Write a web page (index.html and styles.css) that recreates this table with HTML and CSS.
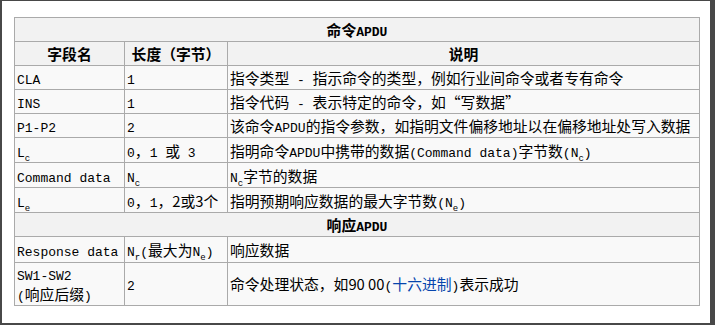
FILE: index.html
```html
<!DOCTYPE html>
<html lang="zh-CN">
<head>
<meta charset="utf-8">
<title>APDU</title>
<link rel="stylesheet" href="styles.css">
</head>
<body>
<div class="frame">
  <table class="apdu">
    <colgroup>
      <col class="c1">
      <col class="c2">
      <col class="c3">
    </colgroup>
    <tr><th colspan="3">命令<span class="m">APDU</span></th></tr>
    <tr><th>字段名</th><th>长度（字节）</th><th>说明</th></tr>
    <tr><td><span class="m">CLA</span></td><td><span class="m">1</span></td><td>指令类型<span class="m"> - </span>指示命令的类型，例如行业间命令或者专有命令</td></tr>
    <tr><td><span class="m">INS</span></td><td><span class="m">1</span></td><td>指令代码<span class="m"> - </span>表示特定的命令，如“写数据”</td></tr>
    <tr><td><span class="m">P1-P2</span></td><td><span class="m">2</span></td><td>该命令<span class="m">APDU</span>的指令参数，如指明文件偏移地址以在偏移地址处写入数据</td></tr>
    <tr class="subrow"><td><span class="m">L<sub>c</sub></span></td><td><span class="m">0</span>，<span class="m">1 </span>或<span class="m"> 3</span></td><td>指明命令<span class="m">APDU</span>中携带的数据<span class="m">(Command data)</span>字节数<span class="m">(N<sub>c</sub>)</span></td></tr>
    <tr class="subrow"><td><span class="m">Command data</span></td><td><span class="m">N<sub>c</sub></span></td><td><span class="m">N<sub>c</sub></span>字节的数据</td></tr>
    <tr class="subrow"><td><span class="m">L<sub>e</sub></span></td><td><span class="m">0</span>，<span class="m">1</span>，2或3个</td><td>指明预期响应数据的最大字节数<span class="m">(N<sub>e</sub>)</span></td></tr>
    <tr><th colspan="3">响应<span class="m">APDU</span></th></tr>
    <tr class="resprow"><td><span class="m">Response data</span></td><td><span class="m">N<sub>r</sub>(</span>最大为<span class="m">N<sub>e</sub>)</span></td><td>响应数据</td></tr>
    <tr class="swrow"><td><span class="m">SW1-SW2</span><br><span class="m">(</span>响应后缀<span class="m">)</span></td><td><span class="m">2</span></td><td>命令处理状态，如90 00<span class="m">(</span><a class="link" href="#">十六进制</a><span class="m">)</span>表示成功</td></tr>
  </table>
</div>
</body>
</html>
```
FILE: styles.css
```css
html, body {
  margin: 0;
  padding: 0;
  background: #ffffff;
}

.frame {
  box-sizing: border-box;
  width: 715px;
  height: 325px;
  overflow: hidden;
  border-style: solid;
  border-color: #484848;
  border-width: 1px 5px 2px 2px;
  padding: 16px 0 0 12px;
}

.apdu {
  border-collapse: collapse;
  table-layout: fixed;
  width: 686px;
  background: #f9f9f9;
  color: #000000;
  font-family: "Noto Sans CJK SC", sans-serif;
  font-size: 14.8px;
  line-height: 18px;
}

.c1 { width: 110px; }
.c2 { width: 103px; }

.apdu th,
.apdu td {
  border: 1px solid #aaaaaa;
  padding: 3px 2px 2px 2px;
  vertical-align: middle;
  white-space: nowrap;
}

.apdu .subrow td {
  padding-top: 4px;
  padding-bottom: 2px;
}

.apdu .resprow td {
  padding-top: 4px;
  padding-bottom: 3px;
}

.apdu .swrow td {
  line-height: 20px;
  padding-top: 1px;
  padding-bottom: 1px;
}

.apdu th {
  background: #f2f2f2;
  font-weight: bold;
  text-align: center;
}

.apdu td {
  text-align: left;
}

.m {
  font-family: "Liberation Mono", monospace;
  font-size: 13px;
  line-height: 12px;
}

.apdu sub {
  font-size: 9px;
  line-height: 0;
}

.link {
  color: #0645ad;
  text-decoration: none;
}
```
